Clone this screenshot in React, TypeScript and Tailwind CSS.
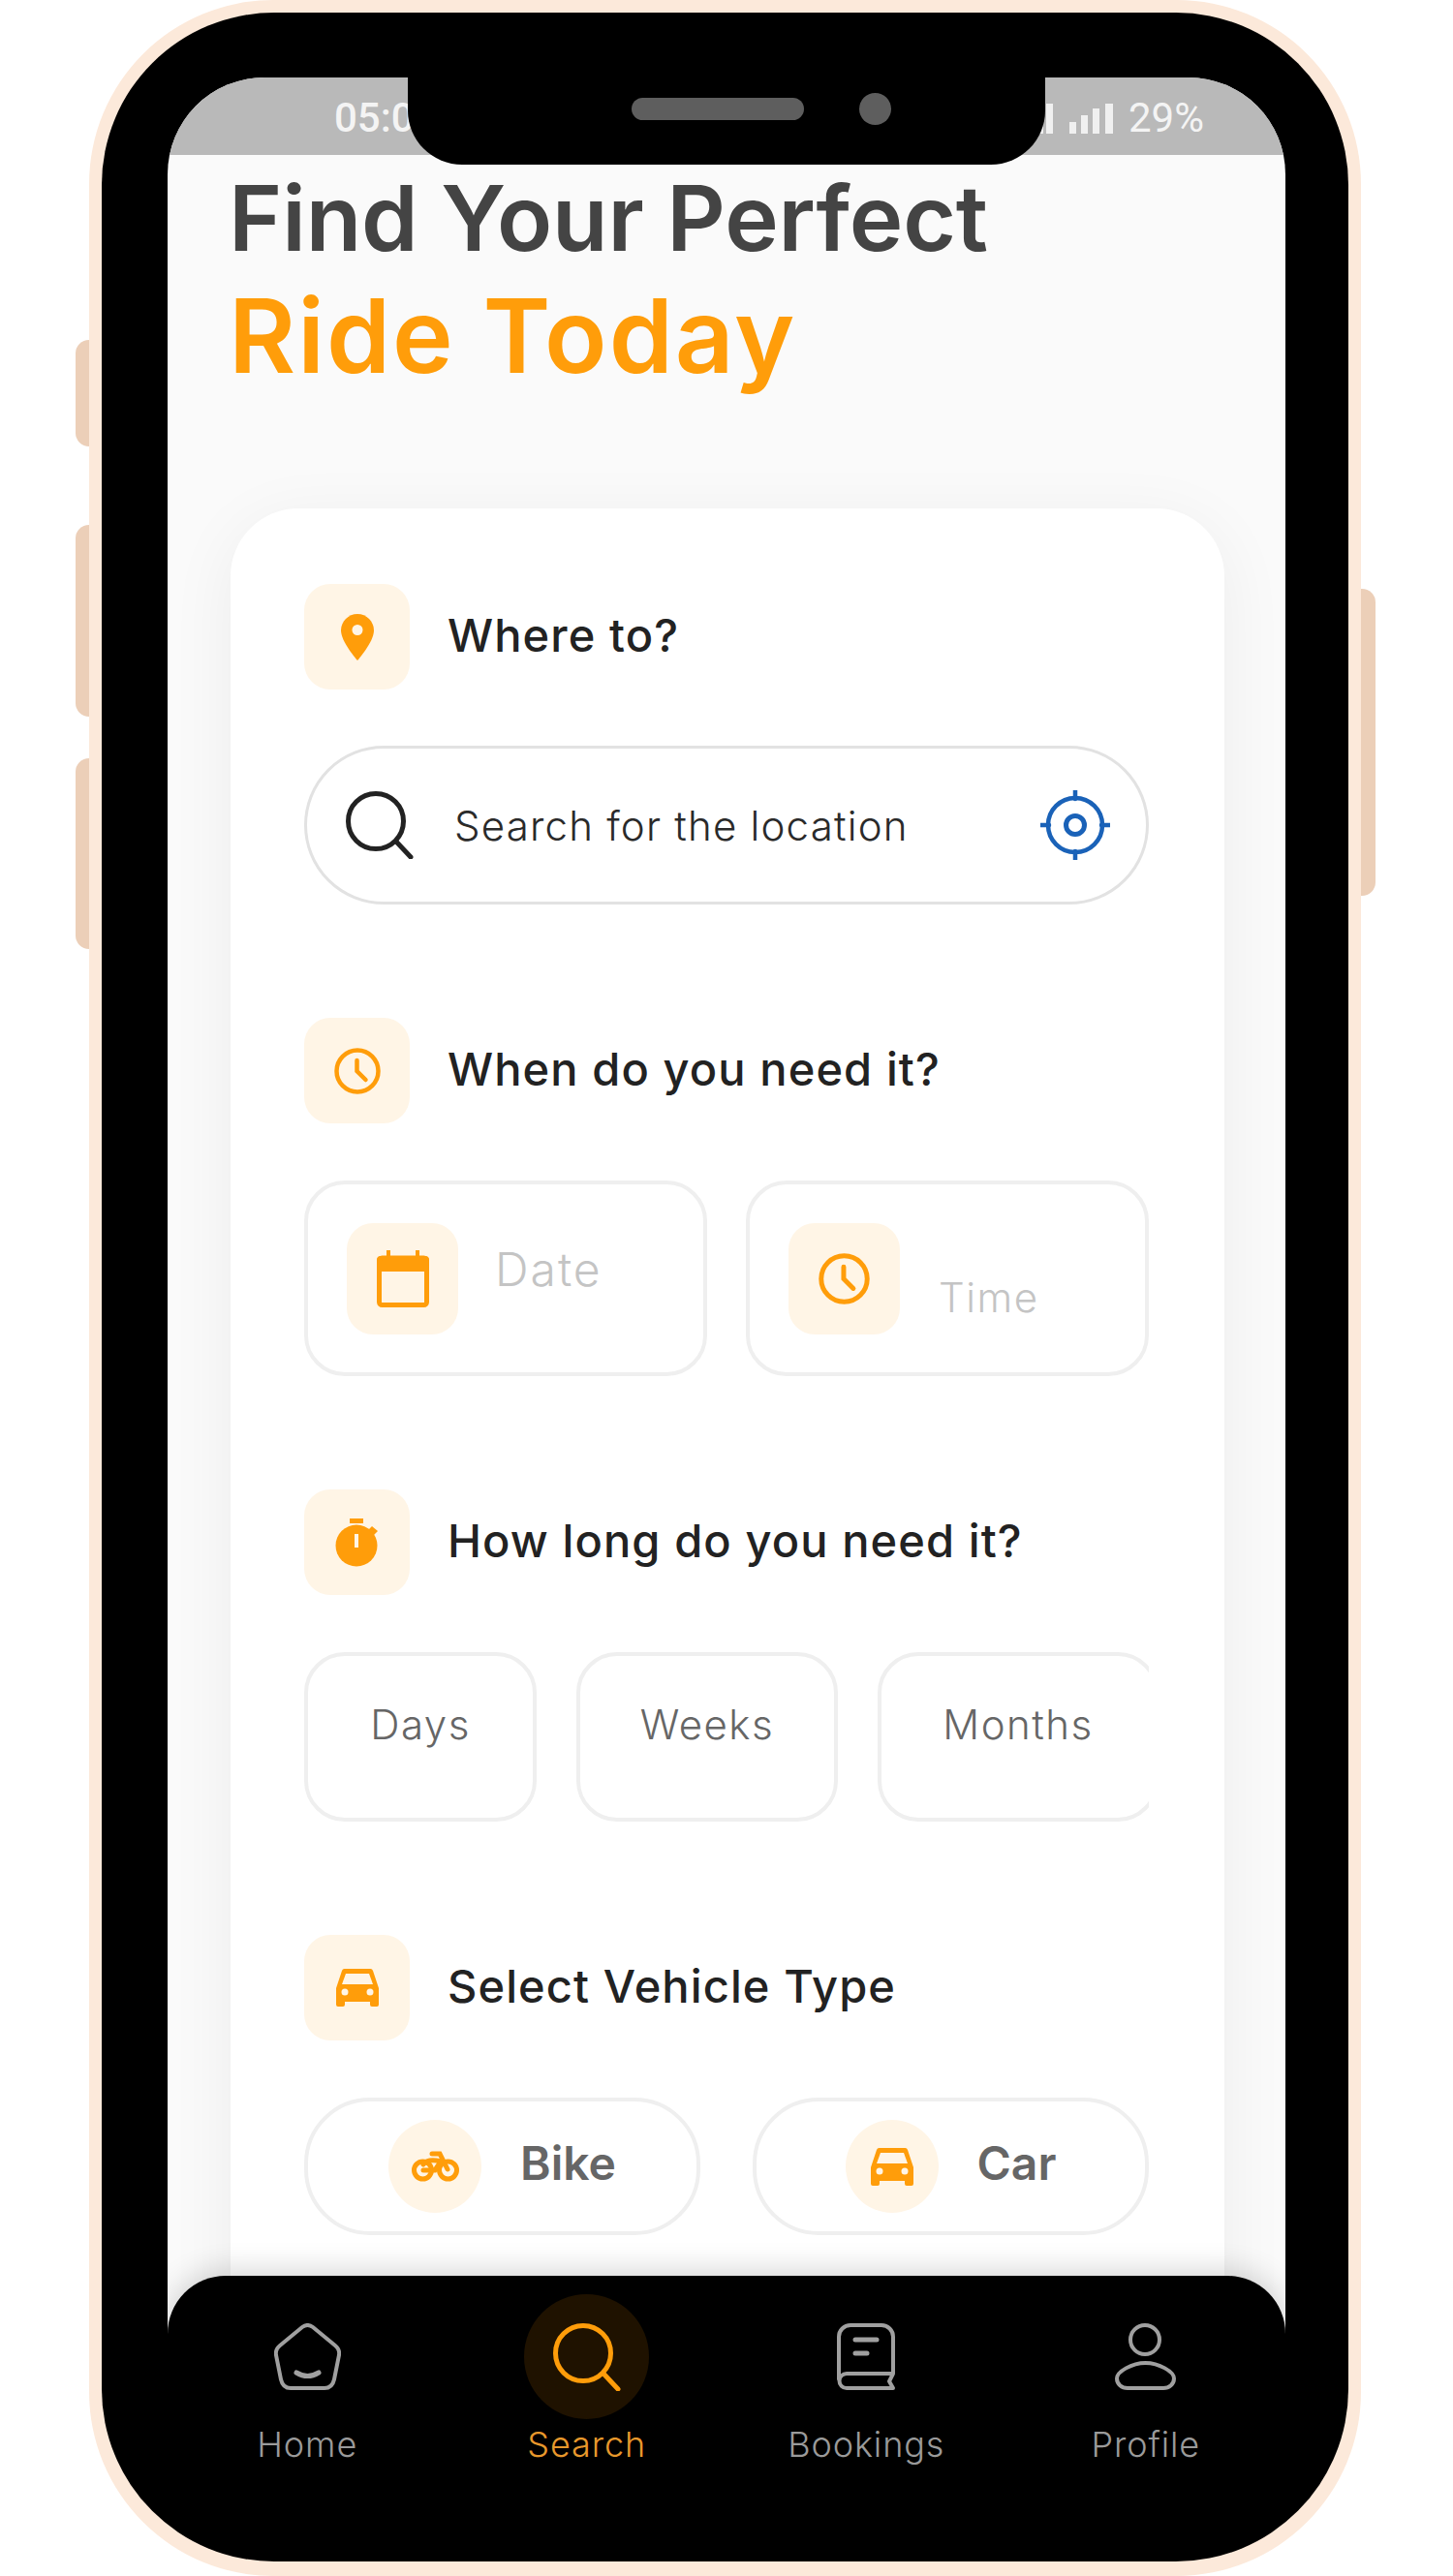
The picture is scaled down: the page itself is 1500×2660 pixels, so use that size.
const Tile = ({ children, big }: { children: React.ReactNode; big?: boolean }) => (
  <div className={`flex shrink-0 items-center justify-center rounded-[27px] bg-[#fff5e6] ${big ? "h-[115px] w-[115px]" : "h-[109px] w-[109px]"}`}>
    {children}
  </div>
);

const SectionTitle = ({ icon, title }: { icon: React.ReactNode; title: string }) => (
  <div className="flex items-center gap-[39px]">
    <Tile>{icon}</Tile>
    <h2 className="mb-[3px] text-[47px] font-medium leading-[60px] tracking-[1.1px] text-[#222222]">{title}</h2>
  </div>
);

const Pin = () => (
  <svg width="34" height="48" viewBox="0 0 34 48">
    <path d="M17 0C7.6 0 0 7.6 0 17c0 12 17 31 17 31s17-19 17-31C34 7.6 26.4 0 17 0Z" fill="#ff9d0a" />
    <circle cx="17" cy="16.5" r="5.5" fill="#fff5e6" />
  </svg>
);

const Clock = ({ size }: { size: number }) => (
  <svg width={size} height={size} viewBox="0 0 48 48" fill="none" stroke="#ff9d0a" strokeWidth="4.5" strokeLinecap="round">
    <circle cx="24" cy="24" r="21.5" />
    <path d="M23.5 13v11l9 9" />
  </svg>
);

const Calendar = () => (
  <svg width="54" height="59" viewBox="0 0 54 59" fill="none">
    <path d="M10 0h4v8h-4zM40 0h4v8h-4z" fill="#ff9d0a" />
    <path d="M4 6h46a4 4 0 0 1 4 4v12H0V10a4 4 0 0 1 4-4Z" fill="#ff9d0a" />
    <rect x="2.500" y="8" width="49" height="48.500" rx="3" stroke="#ff9d0a" strokeWidth="5" />
  </svg>
);

const Stopwatch = () => (
  <svg width="46" height="50" viewBox="0 0 46 50">
    <rect x="15" y="0" width="14" height="5" fill="#ff9d0a" />
    <circle cx="22" cy="28" r="21.5" fill="#ff9d0a" />
    <path d="M38 8l6 5-4 4-6-5z" fill="#ff9d0a" />
    <rect x="20" y="16" width="4" height="14" fill="#fff5e6" />
  </svg>
);

const Car = ({ fill }: { fill: string }) => (
  <svg width="44" height="39" viewBox="0 0 44 39">
    <path
      d="M9 0h26a3 3 0 0 1 3 2l6 18v17a2 2 0 0 1-2 2h-5a2 2 0 0 1-2-2v-3H9v3a2 2 0 0 1-2 2H2a2 2 0 0 1-2-2V20L6 2a3 3 0 0 1 3-2Z"
      fill="#ff9d0a"
    />
    <path d="M10 5h24l4 11H6Z" fill={fill} />
    <circle cx="9" cy="24" r="3.5" fill={fill} />
    <circle cx="35" cy="24" r="3.5" fill={fill} />
  </svg>
);

const Bike = () => (
  <svg width="49" height="32" viewBox="0 0 49 32" fill="none" stroke="#ff9d0a" strokeWidth="5" strokeLinecap="round">
    <circle cx="11.5" cy="20" r="9" />
    <circle cx="37.5" cy="20" r="9" />
    <path d="M21 3h8l8 16M12 20h12l6-9c-8-2-15-1-18 3" />
  </svg>
);

const HomeIcon = () => (
  <svg width="69" height="69" viewBox="0 0 69 69" fill="none" stroke="#a0a0a0" strokeWidth="4" strokeLinecap="round">
    <path d="M29 4Q34.500 0 40 4L63 23Q68 27 67 33L62 58Q60 67 52 67H17Q9 67 7 58L2 33Q1 27 6 23Z" />
    <path d="M23 51q11.500 7 23 0" strokeWidth="5" />
  </svg>
);

const SearchIcon = ({ color, width }: { color: string; width: number }) => (
  <svg width={width} height={width} viewBox="0 0 70 70" fill="none" stroke={color} strokeWidth="5" strokeLinecap="round">
    <circle cx="31" cy="31" r="28.500" />
    <path d="M52 52l15 16" />
  </svg>
);

const BookIcon = () => (
  <svg width="60" height="69" viewBox="0 0 60 69" fill="none" stroke="#a0a0a0" strokeWidth="4" strokeLinecap="round" strokeLinejoin="round">
    <path d="M2 58V14A12 12 0 0 1 14 2h32a12 12 0 0 1 12 12v38H10a7.500 7.500 0 0 0 0 15h48l-4-7 4-8" />
    <path d="M19 17h22M19 31h12" strokeWidth="5" />
  </svg>
);

const ProfileIcon = () => (
  <svg width="63" height="69" viewBox="0 0 63 69" fill="none" stroke="#a0a0a0" strokeWidth="4">
    <ellipse cx="31" cy="17" rx="15" ry="15" />
    <path d="M31.500 41c14 0 29.500 9 29.500 16 0 6-5 10-11 10H13C7 67 2 63 2 57c0-7 15.500-16 29.500-16Z" />
  </svg>
);

const Target = () => (
  <svg width="72" height="72" viewBox="0 0 72 72" fill="none" stroke="#1a62b8" strokeWidth="4.500">
    <circle cx="36" cy="36" r="28" />
    <circle cx="36" cy="36" r="9.500" strokeWidth="5" />
    <path d="M36 0v9M36 63v9M0 36h9M63 36h9" strokeLinecap="round" />
  </svg>
);

const NavItem = ({ icon, label, active }: { icon: React.ReactNode; label: string; active?: boolean }) => (
  <div className="flex flex-col items-center">
    <div className={`flex h-[129px] w-[129px] items-center justify-center rounded-full ${active ? "bg-[#1f1200]" : ""}`}>{icon}</div>
    <span className={`mt-[6px] text-[36px] font-light leading-[40px] tracking-[0.9px] ${active ? "text-[#e8982c]" : "text-[#9a9a9a]"}`}>{label}</span>
  </div>
);

const VehicleOption = ({ icon, label }: { icon: React.ReactNode; label: string }) => (
  <div className="flex h-[142px] flex-1 items-center justify-center gap-[40px] rounded-[68px] border-[4px] border-[#efefef] bg-white">
    <div className="flex h-[96px] w-[96px] items-center justify-center rounded-full bg-[#fff5e6]">{icon}</div>
    <span className="mb-[6px] text-[48px] font-semibold text-[#666666]">{label}</span>
  </div>
);

const App = () => {
  return (
    <div className="h-[2660px] w-[1500px] overflow-hidden bg-white font-['Inter',sans-serif]">
      <div className="relative ml-[92px] h-[2660px] w-[1313px] rounded-[190px] bg-[#fce9da] px-[13px] pt-[13px]">
        {/* side buttons */}
        <div className="absolute left-[-14px] top-[351px] h-[110px] w-[14px] rounded-l-[14px] bg-[#eccfb8]" />
        <div className="absolute left-[-14px] top-[542px] h-[198px] w-[14px] rounded-l-[14px] bg-[#eccfb8]" />
        <div className="absolute left-[-14px] top-[783px] h-[197px] w-[14px] rounded-l-[14px] bg-[#eccfb8]" />
        <div className="absolute right-[-15px] top-[608px] h-[317px] w-[15px] rounded-r-[14px] bg-[#eccfb8]" />

        <div className="relative h-[2632px] rounded-[178px] bg-black pl-[68px] pr-[65px] pt-[67px]">
          <div className="relative h-[2480px] overflow-hidden rounded-t-[100px] bg-[#fafafa]">
            {/* status bar */}
            <div className="flex h-[80px] items-start justify-between bg-[#b9b9b9] pl-[172px] pr-[84px] pt-[22px] font-['Roboto',sans-serif] text-[42px] font-medium leading-[40px] text-[#f4f4f4]">
              <span>05:00</span>
              <div className="flex items-center gap-[16px]">
                <svg width="90" height="32" viewBox="0 0 90 32" fill="#f0f0f0">
                  <rect x="0" y="20" width="7" height="12" />
                  <rect x="11" y="12" width="7" height="20" />
                  <rect x="21" y="1" width="7" height="31" />
                  <rect x="45" y="20" width="7" height="12" />
                  <rect x="57" y="13" width="7" height="19" />
                  <rect x="69" y="6" width="7" height="26" />
                  <rect x="82" y="1" width="8" height="31" />
                </svg>
                <span className="font-normal">29%</span>
              </div>
            </div>

            <div className="pl-[65px] pr-[63px]">
              <h1 className="-ml-[2px] pt-[4px] text-[94px] font-semibold leading-[122px] tracking-[-0.1px] text-[#444444]">Find Your Perfect</h1>
              <p className="-ml-[2px] text-[106px] font-semibold leading-[122px] tracking-[2px] text-[#ff9d0a]">Ride Today</p>

              <div className="mt-[117px] rounded-t-[70px] bg-white pb-[100px] pl-[76px] pr-[78px] pt-[78px] shadow-[0_14px_70px_rgba(0,0,0,0.06)]">
                <SectionTitle icon={<Pin />} title="Where to?" />
                <div className="mt-[58px] flex h-[164px] items-center rounded-full border-[3px] border-[#e2e2e2] bg-white pl-[40px] pr-[37px]">
                  <SearchIcon color="#222222" width={70} />
                  <span className="ml-[42px] flex-1 text-[42px] font-light tracking-[1.2px] text-[#2a2a2a]">Search for the location</span>
                  <Target />
                </div>

                <div className="mt-[117px]">
                  <SectionTitle icon={<Clock size={48} />} title="When do you need it?" />
                </div>
                <div className="mt-[59px] flex gap-[40px]">
                  <div className="flex h-[202px] flex-1 items-center rounded-[42px] border-[4px] border-[#efefef] bg-white pl-[40px]">
                    <Tile big>
                      <Calendar />
                    </Tile>
                    <span className="mb-[18px] ml-[38px] text-[48px] font-light tracking-[2px] text-[#c4c4c4]">Date</span>
                  </div>
                  <div className="flex h-[202px] flex-1 items-center rounded-[42px] border-[4px] border-[#efefef] bg-white pl-[40px]">
                    <Tile big>
                      <Clock size={53} />
                    </Tile>
                    <span className="ml-[40px] mt-[38px] text-[42px] font-light tracking-[1.5px] text-[#c4c4c4]">Time</span>
                  </div>
                </div>

                <div className="mt-[117px]">
                  <SectionTitle icon={<Stopwatch />} title="How long do you need it?" />
                </div>
                <div className="mt-[59px] flex gap-[41px] overflow-hidden text-[42px] font-light leading-[50px] tracking-[1.5px] text-[#666666]">
                  <div className="h-[175px] w-[240px] shrink-0 rounded-[42px] border-[4px] border-[#efefef] bg-white pt-[46px] text-center">Days</div>
                  <div className="h-[175px] w-[270px] shrink-0 rounded-[42px] border-[4px] border-[#efefef] bg-white pt-[46px] text-center">Weeks</div>
                  <div className="h-[175px] w-[290px] shrink-0 rounded-[42px] border-[4px] border-[#efefef] bg-white pt-[46px] text-center">Months</div>
                </div>

                <div className="mt-[117px]">
                  <SectionTitle icon={<Car fill="#fff5e6" />} title="Select Vehicle Type" />
                </div>
                <div className="mt-[59px] flex gap-[54px]">
                  <VehicleOption icon={<Bike />} label="Bike" />
                  <VehicleOption icon={<Car fill="#fff5e6" />} label="Car" />
                </div>
              </div>
            </div>

            {/* bottom nav */}
            <div className="absolute inset-x-0 bottom-0 grid h-[210px] grid-cols-4 rounded-t-[60px] bg-black pt-[19px] shadow-[0_-6px_30px_rgba(0,0,0,0.16)]">
              <NavItem icon={<HomeIcon />} label="Home" />
              <NavItem icon={<SearchIcon color="#ff9d0a" width={70} />} label="Search" active />
              <NavItem icon={<BookIcon />} label="Bookings" />
              <NavItem icon={<ProfileIcon />} label="Profile" />
            </div>
          </div>

          {/* notch */}
          <div className="absolute left-[316px] top-[67px] flex h-[90px] w-[658px] items-start rounded-b-[56px] bg-black pl-[231px] pt-[21px]">
            <div className="h-[23px] w-[178px] rounded-full bg-[#5e5e5e]" />
            <div className="ml-[57px] mt-[-5px] h-[33px] w-[33px] rounded-full bg-[#5e5e5e]" />
          </div>
        </div>
      </div>
    </div>
  );
};

export default App;
